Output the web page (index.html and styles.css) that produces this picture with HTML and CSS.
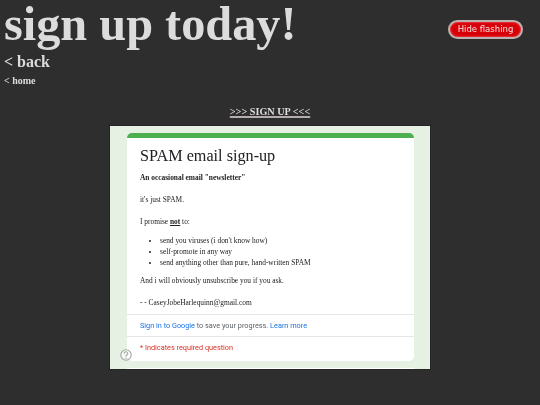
FILE: index.html
```html
<!DOCTYPE html>
<html lang="en">
<head>
<meta charset="utf-8">
<title>sign up today!</title>
<link rel="stylesheet" href="styles.css">
</head>
<body>
<header class="top">
  <h1 class="title">sign up today!</h1>
  <button class="flash-btn" type="button">Hide flashing</button>
</header>
<h2 class="back"><a href="#">&lt; back</a></h2>
<p class="home"><a href="#">&lt; home</a></p>
<p class="signup"><a href="#">&gt;&gt;&gt; SIGN UP &lt;&lt;&lt;</a></p>
<div class="frame">
  <main class="card">
    <div class="card-text">
      <div class="card-body">
        <div class="form-title">SPAM email sign-up</div>
        <p class="lead"><b>An occasional email "newsletter"</b></p>
        <p class="para">it's just SPAM.</p>
        <p class="para">I promise <b class="not">not</b> to:</p>
        <ul class="list">
          <li>send you viruses (i don't know how)</li>
          <li>self-promote in any way</li>
          <li>send anything other than pure, hand-written SPAM</li>
        </ul>
        <p class="para">And i will obviously unsubscribe you if you ask.</p>
        <p class="para last">- - CaseyJobeHarlequinn@gmail.com</p>
      </div>
      <div class="row signin"><a href="#">Sign in to Google</a> to save your progress. <a href="#">Learn more</a></div>
      <div class="row required">* Indicates required question</div>
    </div>
    <svg class="help" viewBox="0 0 12 12" width="12" height="12" aria-hidden="true">
      <circle cx="6" cy="6" r="5.2" fill="#fff" fill-opacity=".5" stroke="#a5a5a5" stroke-width="1.1"/>
      <path d="M4.2 4.6a1.8 1.8 0 1 1 2.7 1.5c-.65.38-.9.7-.9 1.4" fill="none" stroke="#a5a5a5" stroke-width="1.1"/>
      <circle cx="6" cy="9.2" r=".7" fill="#a5a5a5"/>
    </svg>
  </main>
  <div class="next-card"></div>
</div>
</body>
</html>
```
FILE: styles.css
```css
html, body { margin: 0; height: 100%; overflow: hidden; }
body {
  background: #2e2e2e;
  color: #dcdcdc;
  font-family: "Liberation Serif", "Times New Roman", serif;
  padding: 0 4px;
  filter: blur(0.4px);
}
a { color: inherit; text-decoration: none; }
.top {
  display: flex;
  justify-content: space-between;
  align-items: center;
  height: 47px;
}
.title {
  margin: 0;
  font-size: 48.3px;
  line-height: 47px;
  font-weight: 700;
}
.flash-btn {
  margin: 12px 13px 0 0;
  width: 75px;
  height: 19px;
  padding: 0;
  border: 2px solid #bdb0b0;
  border-radius: 10px;
  background: #d80008;
  color: #f6dede;
  font: 8.5px/1 "DejaVu Sans", sans-serif;
  box-shadow: inset 0 0 2px #ff9a9a;
}
.back {
  margin: 6px 0 0;
  font-size: 16px;
  line-height: 18px;
}
.home {
  margin: 4px 0 0;
  font-size: 10px;
  font-weight: 700;
  line-height: 12px;
}
.signup {
  margin: 18px 0 0;
  text-align: center;
  font-size: 10.2px;
  font-weight: 700;
  line-height: 14px;
}
.signup a {
  text-decoration: underline;
  text-decoration-color: #b5adad;
  text-decoration-thickness: 1.5px;
}
.frame {
  width: 320px;
  height: 243px;
  margin: 7px auto 0;
  box-sizing: border-box;
  padding: 7px 16px 0 17px;
  background: #e6f1e4;
  box-shadow: 0 0 0 1px #262626;
  overflow: hidden;
  color: #202124;
}
.card {
  position: relative;
  height: 228px;
  box-sizing: border-box;
  background: #fff;
  border-top: 5px solid #4caf50;
  border-radius: 5px;
}
.card-text { will-change: transform; }
.card-body { padding: 8px 13px 6px; }
.form-title {
  font-size: 16.2px;
  line-height: 20px;
}
.lead { margin: 7px 0 0; font-size: 7.4px; line-height: 10px; }
.para { margin: 12px 0 0; font-size: 7.4px; line-height: 10px; }
.not { text-decoration: underline; }
.list {
  margin: 8px 0 0;
  padding: 0 0 0 20px;
  font-size: 7.4px;
  line-height: 11px;
}
.list + .para { margin-top: 8px; }
.row {
  padding: 6px 13px;
  border-top: 1px solid #e6e6e6;
  font: 7.3px/9px Roboto, "Liberation Sans", sans-serif;
  color: #5f6368;
}
.signin a { color: #1a73e8; }
.required { color: #d93025; }
.help { position: absolute; left: -7px; bottom: 0; }
.next-card { height: 3px; margin-top: 7px; background: #fff; }
```
